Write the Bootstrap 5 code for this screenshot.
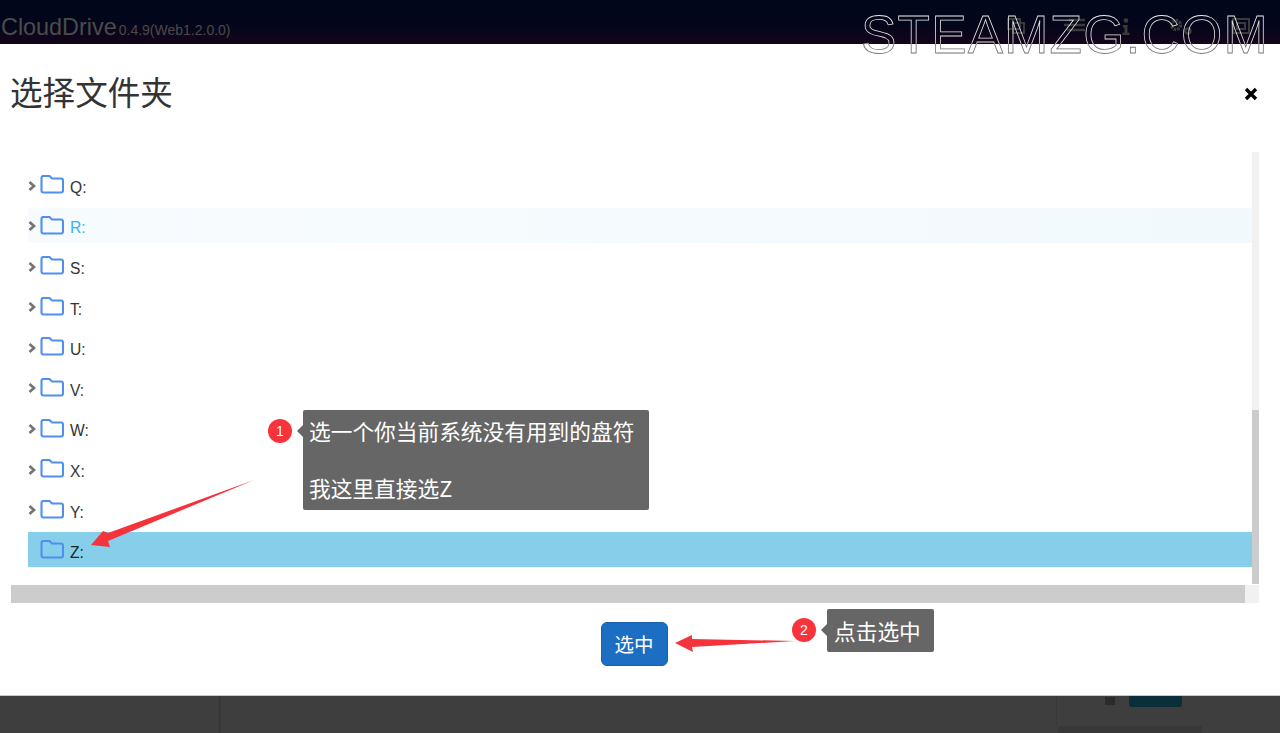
<!DOCTYPE html>
<html lang="zh-CN">
<head>
<meta charset="utf-8">
<title>CloudDrive</title>
<link href="https://cdn.jsdelivr.net/npm/bootstrap@5.3.0/dist/css/bootstrap.min.css" rel="stylesheet">
<style>
html,body{height:733px;overflow:hidden;margin:0}
body{font-family:"Liberation Sans","Noto Sans CJK SC",sans-serif;background:#3e3e3e;position:relative;color:#333}
.top-strip{height:44px;background:linear-gradient(180deg,#00071a 0%,#03061a 55%,#14041a 100%);color:#4b4b4b;line-height:1;padding-top:16px;white-space:nowrap}
.brand-name{font-size:23.4px;margin-left:1px}
.brand-ver{font-size:14px;margin-left:2px;color:#4a4a4a;padding-top:7px}
.strip-icons{margin-left:auto;padding-top:2px;color:#3a3a3a}
.strip-icons svg{display:block;flex:none}
.ico-a{width:20px;height:16px;margin-right:37px}
.ico-b{width:23px;height:16px;margin-right:36px}
.ico-c{width:8px;height:17px;margin-right:39px}
.ico-d{width:24px;height:17px;margin-right:39px}
.ico-e{width:18px;height:16px;margin-right:30px}
.sheet{height:652px;background:#fff;border-bottom:1px solid #c9c9c9}
.sheet-head{height:108px;padding:31px 22px 0 10px}
.sheet-title{font-size:32.6px;line-height:37px;font-weight:400;color:#333;margin:0}
.close-x{width:14px;height:14px;margin-top:12px}
.tree-frame{height:451px;padding-left:11px;padding-right:21px;position:relative}
.tree-scroll{height:433px;padding:15px 0 0 17px}
.tree-row{height:35px;margin-bottom:5.6px;font-size:15.6px;color:#333}
.tree-row.is-hover{background:linear-gradient(90deg,#f7fbfe,#f2f9fd);color:#2fb8f2}
.tree-row.is-sel{background:#87ceeb;color:#222}
.chev{width:8px;height:10px;margin-right:4px;flex:none;position:relative;top:1px}
.chev-none{width:8px;margin-right:4px;flex:none}
.folder{width:24px;height:19px;margin-right:6px;flex:none}
.drive{position:relative;top:3px}
.v-track{position:absolute;left:1252px;top:0;width:7px;height:432px;background:#f1f1f1}
.v-thumb{position:absolute;left:0;bottom:0;width:100%;height:174px;background:#ccc}
.h-track{height:18px;background:#f1f1f1}
.h-thumb{height:18px;width:1234px;background:#ccc}
.sheet-foot{padding-top:19px;padding-right:12px}
.pick-btn{width:67px;height:44px;padding:0;background:#1b6ec2;border-color:#1861ac;font-size:19.5px;color:#fff;font-family:"Noto Sans CJK SC",sans-serif}
.bottom-strip{height:37px;position:relative}
.divider{position:absolute;left:218px;top:0;bottom:0;width:3px;background:#383838}
.ghost-panel{position:absolute;left:1056px;top:0;width:224px;height:30px;border-left:1px solid #383838}
.ghost-panel2{position:absolute;left:1129px;top:0;width:53px;height:11px;background:#0a2f38;border-radius:0 0 3px 3px}
.ghost-ico{position:absolute;left:1105px;top:1px;width:10px;height:8px;background:#2b2b2b}
.ghost-line{position:absolute;left:1058px;top:30px;width:144px;height:7px;background:#383838}
.callout{position:absolute;background:#666;color:#fff;border-radius:2px;font-family:"Noto Sans CJK SC",sans-serif;white-space:nowrap;font-size:21.7px}
.callout::before{content:"";position:absolute;left:-6px;top:15px;border:6px solid transparent;border-left:0;border-right-color:#666}
.call-one{left:303px;top:410px;width:346px;height:100px;padding:5px 0 0 6px;line-height:32px}
.call-one p{margin:0 0 25px}
.call-two{left:827px;top:609px;width:107px;height:43px;padding:6px 0 0 7px;line-height:32px}
.num-dot{position:absolute;width:24px;height:24px;border-radius:50%;background:#f9333b;color:#fff;font-size:14px;line-height:24px;text-align:center}
.dot-one{left:268px;top:419px}
.dot-two{left:792px;top:618px}
.arrows{position:absolute;left:0;top:0;pointer-events:none}
.mark-text{font-family:"Liberation Sans",sans-serif;font-size:53px;letter-spacing:1.2px}
</style>
</head>
<body>
<div class="top-strip d-flex align-items-start">
  <span class="brand-name">CloudDrive</span><span class="brand-ver">0.4.9(Web1.2.0.0)</span>
  <div class="strip-icons d-flex">
    <svg class="ico-a" viewBox="0 0 20 16"><path d="M2 1H14V11H2ZM7 5H18V15H7Z" fill="none" stroke="currentColor" stroke-width="2"/></svg>
    <svg class="ico-b" viewBox="0 0 23 16"><path d="M6 2H22M1 7H22M4 12H22" fill="none" stroke="currentColor" stroke-width="2.5"/></svg>
    <svg class="ico-c" viewBox="0 0 8 17"><circle cx="4" cy="2.5" r="2.3" fill="currentColor"/><path d="M1 7H5.5V14.5H7.5V17H.5V14.5H2.5V9.5H1Z" fill="currentColor"/></svg>
    <svg class="ico-d" viewBox="0 0 24 17"><circle cx="7" cy="7" r="4.5" fill="none" stroke="currentColor" stroke-width="3.4" stroke-dasharray="2.4 1"/><circle cx="19" cy="13" r="2.6" fill="none" stroke="currentColor" stroke-width="2.2"/></svg>
    <svg class="ico-e" viewBox="0 0 18 16"><path d="M1 1H17V15H1ZM5 5H13V11H5Z" fill="none" stroke="currentColor" stroke-width="2"/></svg>
  </div>
</div>
<div class="sheet d-flex flex-column">
  <div class="sheet-head d-flex justify-content-between align-items-start">
    <h1 class="sheet-title">选择文件夹</h1>
    <svg class="close-x" viewBox="0 0 14 14"><path d="M2 2 12 12M12 2 2 12" stroke="#000" stroke-width="3.4" fill="none"/></svg>
  </div>
  <div class="tree-frame">
    <div class="tree-scroll">
      <div class="tree-row d-flex align-items-center"><svg class="chev" viewBox="0 0 8 10"><path d="M1.5 1 6 5 1.5 9" fill="none" stroke="#757575" stroke-width="2.7"/></svg><svg class="folder" viewBox="0 0 24 19"><path d="M1.5 3Q1.5 1 3.5 1H9.5L12 3.5H21Q23 3.5 23 5.5V15.5Q23 17.5 21 17.5H3.5Q1.5 17.5 1.5 15.5Z" fill="none" stroke="#4f8ff0" stroke-width="2.1"/></svg><span class="drive">Q:</span></div>
      <div class="tree-row is-hover d-flex align-items-center"><svg class="chev" viewBox="0 0 8 10"><path d="M1.5 1 6 5 1.5 9" fill="none" stroke="#757575" stroke-width="2.7"/></svg><svg class="folder" viewBox="0 0 24 19"><path d="M1.5 3Q1.5 1 3.5 1H9.5L12 3.5H21Q23 3.5 23 5.5V15.5Q23 17.5 21 17.5H3.5Q1.5 17.5 1.5 15.5Z" fill="none" stroke="#4f8ff0" stroke-width="2.1"/></svg><span class="drive">R:</span></div>
      <div class="tree-row d-flex align-items-center"><svg class="chev" viewBox="0 0 8 10"><path d="M1.5 1 6 5 1.5 9" fill="none" stroke="#757575" stroke-width="2.7"/></svg><svg class="folder" viewBox="0 0 24 19"><path d="M1.5 3Q1.5 1 3.5 1H9.5L12 3.5H21Q23 3.5 23 5.5V15.5Q23 17.5 21 17.5H3.5Q1.5 17.5 1.5 15.5Z" fill="none" stroke="#4f8ff0" stroke-width="2.1"/></svg><span class="drive">S:</span></div>
      <div class="tree-row d-flex align-items-center"><svg class="chev" viewBox="0 0 8 10"><path d="M1.5 1 6 5 1.5 9" fill="none" stroke="#757575" stroke-width="2.7"/></svg><svg class="folder" viewBox="0 0 24 19"><path d="M1.5 3Q1.5 1 3.5 1H9.5L12 3.5H21Q23 3.5 23 5.5V15.5Q23 17.5 21 17.5H3.5Q1.5 17.5 1.5 15.5Z" fill="none" stroke="#4f8ff0" stroke-width="2.1"/></svg><span class="drive">T:</span></div>
      <div class="tree-row d-flex align-items-center"><svg class="chev" viewBox="0 0 8 10"><path d="M1.5 1 6 5 1.5 9" fill="none" stroke="#757575" stroke-width="2.7"/></svg><svg class="folder" viewBox="0 0 24 19"><path d="M1.5 3Q1.5 1 3.5 1H9.5L12 3.5H21Q23 3.5 23 5.5V15.5Q23 17.5 21 17.5H3.5Q1.5 17.5 1.5 15.5Z" fill="none" stroke="#4f8ff0" stroke-width="2.1"/></svg><span class="drive">U:</span></div>
      <div class="tree-row d-flex align-items-center"><svg class="chev" viewBox="0 0 8 10"><path d="M1.5 1 6 5 1.5 9" fill="none" stroke="#757575" stroke-width="2.7"/></svg><svg class="folder" viewBox="0 0 24 19"><path d="M1.5 3Q1.5 1 3.5 1H9.5L12 3.5H21Q23 3.5 23 5.5V15.5Q23 17.5 21 17.5H3.5Q1.5 17.5 1.5 15.5Z" fill="none" stroke="#4f8ff0" stroke-width="2.1"/></svg><span class="drive">V:</span></div>
      <div class="tree-row d-flex align-items-center"><svg class="chev" viewBox="0 0 8 10"><path d="M1.5 1 6 5 1.5 9" fill="none" stroke="#757575" stroke-width="2.7"/></svg><svg class="folder" viewBox="0 0 24 19"><path d="M1.5 3Q1.5 1 3.5 1H9.5L12 3.5H21Q23 3.5 23 5.5V15.5Q23 17.5 21 17.5H3.5Q1.5 17.5 1.5 15.5Z" fill="none" stroke="#4f8ff0" stroke-width="2.1"/></svg><span class="drive">W:</span></div>
      <div class="tree-row d-flex align-items-center"><svg class="chev" viewBox="0 0 8 10"><path d="M1.5 1 6 5 1.5 9" fill="none" stroke="#757575" stroke-width="2.7"/></svg><svg class="folder" viewBox="0 0 24 19"><path d="M1.5 3Q1.5 1 3.5 1H9.5L12 3.5H21Q23 3.5 23 5.5V15.5Q23 17.5 21 17.5H3.5Q1.5 17.5 1.5 15.5Z" fill="none" stroke="#4f8ff0" stroke-width="2.1"/></svg><span class="drive">X:</span></div>
      <div class="tree-row d-flex align-items-center"><svg class="chev" viewBox="0 0 8 10"><path d="M1.5 1 6 5 1.5 9" fill="none" stroke="#757575" stroke-width="2.7"/></svg><svg class="folder" viewBox="0 0 24 19"><path d="M1.5 3Q1.5 1 3.5 1H9.5L12 3.5H21Q23 3.5 23 5.5V15.5Q23 17.5 21 17.5H3.5Q1.5 17.5 1.5 15.5Z" fill="none" stroke="#4f8ff0" stroke-width="2.1"/></svg><span class="drive">Y:</span></div>
      <div class="tree-row is-sel d-flex align-items-center"><span class="chev-none"></span><svg class="folder" viewBox="0 0 24 19"><path d="M1.5 3Q1.5 1 3.5 1H9.5L12 3.5H21Q23 3.5 23 5.5V15.5Q23 17.5 21 17.5H3.5Q1.5 17.5 1.5 15.5Z" fill="none" stroke="#4f8ff0" stroke-width="2.1"/></svg><span class="drive">Z:</span></div>
    </div>
    <div class="h-track"><div class="h-thumb"></div></div>
    <div class="v-track"><div class="v-thumb"></div></div>
  </div>
  <div class="sheet-foot d-flex justify-content-center"><button type="button" class="btn pick-btn">选中</button></div>
</div>
<div class="bottom-strip">
  <div class="divider"></div>
  <div class="ghost-panel"></div>
  <div class="ghost-ico"></div>
  <div class="ghost-panel2"></div>
  <div class="ghost-line"></div>
</div>

<svg class="arrows" width="1280" height="733" viewBox="0 0 1280 733">
  <defs><linearGradient id="markStroke" gradientUnits="userSpaceOnUse" x1="0" y1="10" x2="0" y2="60"><stop offset="0" stop-color="#ececec"/><stop offset=".66" stop-color="#d8d8d8"/><stop offset=".68" stop-color="#777"/><stop offset="1" stop-color="#777"/></linearGradient></defs>
  <path d="M254 480 108 533 103 531 91 545 110 547 108 541Z" fill="#f5333b"/>
  <path d="M795 641 692 639 692 635 675 643 693 652 692 647Z" fill="#f5333b"/>
  <text class="mark-text" x="861" y="53" fill="none" stroke="url(#markStroke)" stroke-width=".8">STEAMZG.COM</text>
</svg>
<div class="callout call-one"><p>选一个你当前系统没有用到的盘符</p><p>我这里直接选Z</p></div>
<div class="num-dot dot-one">1</div>
<div class="callout call-two">点击选中</div>
<div class="num-dot dot-two">2</div>
</body>
</html>
